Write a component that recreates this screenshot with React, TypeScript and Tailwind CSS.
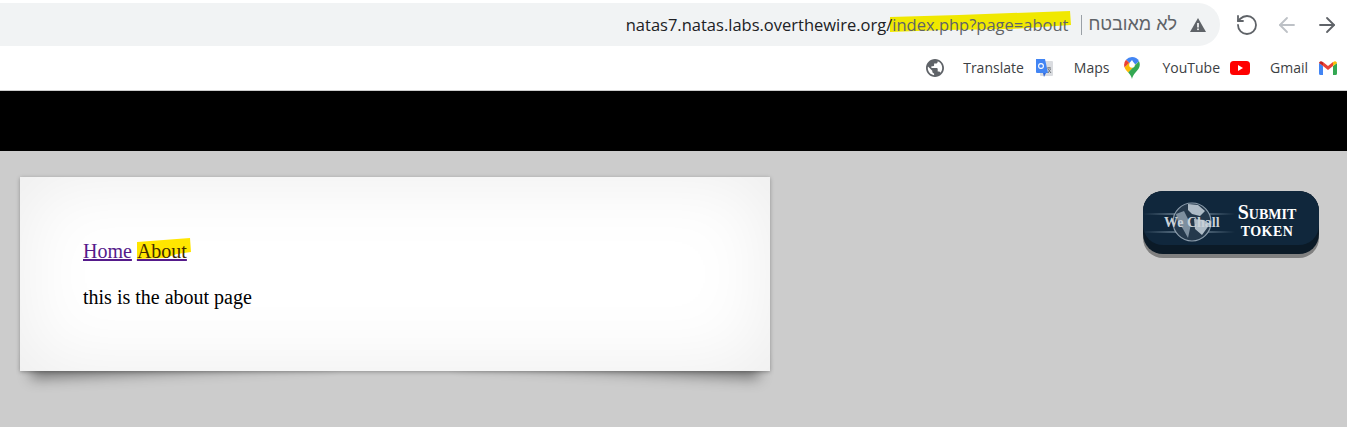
import { RotateCcw, ArrowLeft, ArrowRight } from "lucide-react";

const uiFont = { fontFamily: '"Open Sans", "Liberation Sans", sans-serif' };

const GlobeIcon = () => (
  <svg width="18" height="18" viewBox="2 2 20 20">
    <path
      d="M12 2C6.480 2 2 6.480 2 12s4.480 10 10 10 10-4.480 10-10S17.520 2 12 2zm-1 17.930c-3.950-.490-7-3.850-7-7.930 0-.620.080-1.210.210-1.790L9 15v1c0 1.100.900 2 2 2v1.930zm6.900-2.540c-.260-.810-1-1.390-1.900-1.390h-1v-3c0-.550-.450-1-1-1H8v-2h2c.550 0 1-.450 1-1V7h2c1.100 0 2-.900 2-2v-.410c2.930 1.190 5 4.060 5 7.410 0 2.080-.800 3.970-2.100 5.390z"
      fill="#5f6368"
    />
  </svg>
);

const TranslateIcon = () => (
  <svg width="20" height="20" viewBox="0 0 20 20">
    <rect x="6" y="3" width="13" height="15" rx="1" fill="#dadce0" />
    <path d="M2 1h9l3 14H3a1 1 0 0 1-1-1z" fill="#4285f4" />
    <path d="M9 15l3 0-2 4z" fill="#3367d6" />
    <circle cx="7" cy="8" r="2.4" fill="none" stroke="#fff" strokeWidth="1.1" />
    <path d="M13 10h4M15 9v1M14 15l2.500-4M14 11l3 4" stroke="#70757a" strokeWidth="1" fill="none" />
  </svg>
);

const MapsIcon = () => (
  <svg width="16" height="22" viewBox="0 0 16 22">
    <path d="M8 0a8 8 0 0 0-6 2.700L5.500 6 8 3z" fill="#4285f4" />
    <path d="M8 0a8 8 0 0 1 7 4.200L11 8 8 3z" fill="#4285f4" />
    <path d="M2 2.700A8 8 0 0 0 .6 10.500L5.500 6z" fill="#ea4335" />
    <path d="M.6 10.500c1 2.500 2.500 3.500 3.600 5L14 5.500 11 8 5 6z" fill="#fbbc04" />
    <path d="M15 4.200a8 8 0 0 1 0 6.800c-2 3.500-6 6-7 11-.6-3-2.300-4.800-3.800-6.500z" fill="#34a853" />
    <circle cx="8" cy="8" r="2.800" fill="#fff" />
  </svg>
);

const YoutubeIcon = () => (
  <svg width="20" height="14" viewBox="0 0 20 14">
    <rect width="20" height="14" rx="3.500" fill="#ff0000" />
    <path d="M8 4l5 3-5 3z" fill="#fff" />
  </svg>
);

const GmailIcon = () => (
  <svg width="18" height="14" viewBox="0 0 18 14">
    <path d="M0 2v10.500A1.500 1.500 0 0 0 1.500 14H4V5z" fill="#4285f4" />
    <path d="M14 5v9h2.500a1.500 1.500 0 0 0 1.500-1.500V2z" fill="#34a853" />
    <path d="M4 5v-4l5 4 5-4v4l-5 4z" fill="#ea4335" />
    <path d="M0 2a2 2 0 0 1 3-1.500L4 1.200V5L0 2z" fill="#c5221f" />
    <path d="M18 2a2 2 0 0 0-3-1.500l-1 .7V5l4-3z" fill="#fbbc04" />
  </svg>
);

const Bookmark = ({ label, icon, wide }: { label: string; icon: React.ReactNode; wide?: boolean }) => (
  <div className={wide ? "flex items-center gap-[13px]" : "flex items-center gap-[10px]"}>
    <span className="whitespace-nowrap text-[14px] text-[#3c4043]">{label}</span>
    <span className="flex h-5 w-5 items-center justify-center">{icon}</span>
  </div>
);

const SubmitButton = () => (
  <div className="h-[67px] w-[176px] rounded-[20px] bg-[#808080] pb-[4px]">
    <div className="h-full rounded-[20px] bg-[#0b1a27] pb-[9px]">
      <div className="relative flex h-full items-center overflow-hidden rounded-[20px] bg-[#10273c]">
        <div className="absolute left-0 top-[22px] h-[2px] w-[92px] bg-gradient-to-r from-transparent via-[#6f8597] to-transparent" />
        <div className="absolute left-0 top-[40px] h-[2px] w-[92px] bg-gradient-to-r from-transparent via-[#6f8597] to-transparent" />
        <svg className="absolute left-[29px] top-[11px]" width="40" height="40" viewBox="0 0 40 40">
          <circle cx="20" cy="20" r="19" fill="#25394c" stroke="#8b9cab" strokeWidth="1.200" />
          <path d="M16 2l10 1 7 6-5 5-8-2-4-4zM22 17l10 1 6 4-8 11-7-6z" fill="#aebbc6" />
          <path d="M4 12l8-3 4 8 3 5-3 14-5-9-5-7z" fill="#7d8f9f" />
        </svg>
        <span
          className="absolute left-[21px] top-[24px] text-[14px] font-bold leading-[16px] text-[#c9d1d8]"
          style={{ fontFamily: '"Liberation Serif", serif' }}
        >
          We Chall
        </span>
        <div
          className="ml-[90px] mt-[8px] flex w-[68px] flex-col items-center font-bold leading-[19px] text-white"
          style={{ fontFamily: '"Liberation Serif", serif' }}
        >
          <span className="text-[20px] [font-variant-caps:small-caps]">Submit</span>
          <span className="text-[14px] uppercase tracking-[0.4px]">token</span>
        </div>
      </div>
    </div>
  </div>
);

const Card = () => (
  <div className="relative w-[750px]">
    {/* corner shadows */}
    <div className="absolute bottom-[15px] left-[10px] h-[20px] w-[300px] -rotate-3 shadow-[0_15px_14px_rgba(0,0,0,0.42)]" />
    <div className="absolute bottom-[15px] right-[10px] h-[20px] w-[300px] rotate-3 shadow-[0_15px_14px_rgba(0,0,0,0.42)]" />
    <div
      className="relative h-[194px] bg-white px-[63px] pt-[63px] text-[20px] leading-[23px] text-black shadow-[0_1px_4px_rgba(0,0,0,0.3),inset_0_0_80px_rgba(0,0,0,0.08)]"
      style={{ fontFamily: '"Liberation Serif", serif' }}
    >
      <div>
        <a className="text-[#551a8b] underline">Home</a>{" "}
        <a className="relative text-[#551a8b]">
          <svg className="absolute left-0 top-[-2px]" width="54" height="22" viewBox="0 0 54 22">
            <path d="M0 4L53 0l1 14-14 2-12 4-28 1z" fill="#ffe600" />
          </svg>
          <span className="relative text-[#3f2a00] underline decoration-[#551a8b]">About</span>
        </a>
      </div>
      <p className="mt-[23px]">this is the about page</p>
    </div>
  </div>
);

export default function App() {
  return (
    <div className="flex h-[427px] w-[1347px] flex-col overflow-hidden bg-[#cccccc]">
      {/* browser toolbar */}
      <div className="bg-white" style={uiFont}>
        <div className="flex h-[50px] items-start pt-[3px]">
          <div className="flex h-[43px] flex-1 items-center justify-end rounded-r-[22px] bg-[#f1f3f4] pr-[14px]">
            <div className="relative text-[16.5px] leading-[23px] text-[#5f6368]">
              <span className="relative z-10 text-[#202124]">natas7.natas.labs.overthewire.org/</span>
              <span className="relative">
                <svg className="absolute left-[-2px] top-[-4px]" width="181" height="28" viewBox="0 0 184 28" preserveAspectRatio="none">
                  <path d="M0 8L70 6 183 2l1 14-60 4-70 1-54 2z" fill="#f0e800" />
                </svg>
                <span className="relative">index.php?page=about</span>
              </span>
            </div>
            <div className="ml-[13px] h-[20px] w-px bg-[#9aa0a6]" />
            <span
              dir="rtl"
              className="ml-[6px] text-[18px] leading-[23px] text-[#5f6368]"
              style={{ fontFamily: '"Liberation Sans", sans-serif' }}
            >
              לא מאובטח
            </span>
            <svg className="ml-[13px]" width="16" height="14" viewBox="0 0 16 14">
              <path d="M8 0l8 14H0z" fill="#5f6368" />
              <rect x="7.200" y="5" width="1.600" height="4.500" fill="#fff" />
              <rect x="7.200" y="10.500" width="1.600" height="1.600" fill="#fff" />
            </svg>
          </div>
          <div className="flex h-[43px] w-[127px] items-center pl-[15px]">
            <RotateCcw className="text-[#5f6368]" size={24} strokeWidth={1.8} />
            <ArrowLeft className="ml-[16px] text-[#bdc1c6]" size={24} strokeWidth={1.8} />
            <ArrowRight className="ml-[16px] text-[#5f6368]" size={24} strokeWidth={1.8} />
          </div>
        </div>
        <div className="flex h-[40px] items-center justify-end gap-[20px] pb-[5px] pr-[9px]">
          <div className="-mr-px">
            <GlobeIcon />
          </div>
          <Bookmark label="Translate" icon={<TranslateIcon />} />
          <Bookmark label="Maps" icon={<MapsIcon />} wide />
          <Bookmark label="YouTube" icon={<YoutubeIcon />} />
          <Bookmark label="Gmail" icon={<GmailIcon />} />
        </div>
      </div>
      <div className="mt-px h-[60px] bg-black" />
      {/* page body */}
      <div className="flex items-start justify-between pl-[20px] pr-[28px] pt-[26px]">
        <Card />
        <div className="mt-[14px]">
          <SubmitButton />
        </div>
      </div>
    </div>
  );
}
